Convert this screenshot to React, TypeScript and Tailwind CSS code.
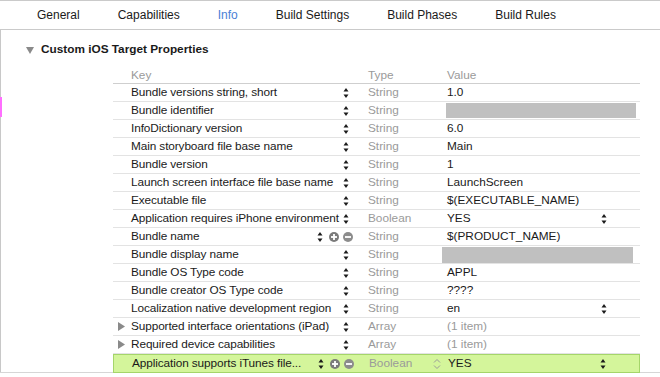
import React from "react";

type Row = {
  key: string;
  type: string;
  value?: string;
  redact?: "a" | "b";
  dropdown?: boolean;
  expand?: boolean;
  editing?: boolean;
  selected?: boolean;
  dimValue?: boolean;
};

const rows: Row[] = [
  { key: "Bundle versions string, short", type: "String", value: "1.0" },
  { key: "Bundle identifier", type: "String", redact: "a" },
  { key: "InfoDictionary version", type: "String", value: "6.0" },
  { key: "Main storyboard file base name", type: "String", value: "Main" },
  { key: "Bundle version", type: "String", value: "1" },
  { key: "Launch screen interface file base name", type: "String", value: "LaunchScreen" },
  { key: "Executable file", type: "String", value: "$(EXECUTABLE_NAME)" },
  { key: "Application requires iPhone environment", type: "Boolean", value: "YES", dropdown: true },
  { key: "Bundle name", type: "String", value: "$(PRODUCT_NAME)", editing: true },
  { key: "Bundle display name", type: "String", redact: "b" },
  { key: "Bundle OS Type code", type: "String", value: "APPL" },
  { key: "Bundle creator OS Type code", type: "String", value: "????" },
  { key: "Localization native development region", type: "String", value: "en", dropdown: true },
  { key: "Supported interface orientations (iPad)", type: "Array", value: "(1 item)", expand: true, dimValue: true },
  { key: "Required device capabilities", type: "Array", value: "(1 item)", expand: true, dimValue: true },
  {
    key: "Application supports iTunes file...",
    type: "Boolean",
    value: "YES",
    dropdown: true,
    editing: true,
    selected: true,
  },
];

const tabs = ["General", "Capabilities", "Info", "Build Settings", "Build Phases", "Build Rules"];

function Stepper() {
  return (
    <svg width="6" height="12" viewBox="0 0 6 12" className="shrink-0">
      <path d="M0.5 4.5 L3 1 L5.5 4.5 Z" fill="#1a1a1a" />
      <path d="M0.5 7.5 L5.5 7.5 L3 11 Z" fill="#1a1a1a" />
    </svg>
  );
}

function Chevrons() {
  return (
    <svg width="8" height="12" viewBox="0 0 8 12" className="shrink-0">
      <path d="M1 4.5 L4 1.5 L7 4.5" fill="none" stroke="#9a9a9a" strokeWidth="1" />
      <path d="M1 7.5 L4 10.5 L7 7.5" fill="none" stroke="#9a9a9a" strokeWidth="1" />
    </svg>
  );
}

function CircleButton({ minus }: { minus?: boolean }) {
  return (
    <svg width="10" height="10" viewBox="0 0 10 10" className="shrink-0">
      <circle cx="5" cy="5" r="5" fill={minus ? "#8c8c8c" : "#7a7a7a"} />
      <rect x="2" y="4.1" width="6" height="1.8" fill="#fff" />
      {!minus && <rect x="4.1" y="2" width="1.8" height="6" fill="#fff" />}
    </svg>
  );
}

function PropertyRow({ row }: { row: Row }) {
  return (
    <div
      className={
        row.selected
          ? "flex h-[19px] items-center border border-[#a5d56a] bg-[#d4f59b]"
          : "flex h-[18px] items-center border-b border-[#e3e3e3]"
      }
    >
      {/* key */}
      <div className="flex h-full w-[251px] shrink-0 items-center">
        <div className="flex w-[18px] shrink-0 items-center pl-[5px]">
          {row.expand && (
            <svg width="7" height="9" viewBox="0 0 7 9">
              <path d="M0 0 L7 4.5 L0 9 Z" fill="#8a8a8a" />
            </svg>
          )}
        </div>
        <span className="min-w-0 flex-1 whitespace-nowrap tracking-[-0.1px]">{row.key}</span>
        {row.editing ? (
          <div className="flex shrink-0 items-center pr-[11px]">
            <Stepper />
            <div className="ml-[6px]">
              <CircleButton />
            </div>
            <div className="ml-[4px]">
              <CircleButton minus />
            </div>
          </div>
        ) : (
          <div className="flex shrink-0 items-center pr-[15px]">
            <Stepper />
          </div>
        )}
      </div>
      {/* type */}
      <div className="flex h-full w-[79px] shrink-0 items-center justify-between pl-[4px] pr-[3px] text-[#9a9a9a]">
        <span>{row.type}</span>
        {row.selected && <Chevrons />}
      </div>
      {/* value */}
      <div className="flex h-full min-w-0 flex-1 items-center justify-between pl-[4px] pr-[33px]">
        {row.redact === "a" && <div className="ml-[-1px] h-[15px] w-[190px] shrink-0 bg-[#c0c0c0]" />}
        {row.redact === "b" && <div className="ml-[-5px] h-[16px] w-[191px] shrink-0 bg-[#c0c0c0]" />}
        {row.value && <span className={row.dimValue ? "text-[#9a9a9a]" : ""}>{row.value}</span>}
        {row.dropdown && <Stepper />}
      </div>
    </div>
  );
}

export default function App() {
  return (
    <div
      className="h-[377px] w-[660px] overflow-hidden bg-white text-[11.8px] leading-none text-[#1a1a1a]"
      style={{ fontFamily: '"Liberation Sans", Arial, sans-serif' }}
    >
      {/* Tab bar */}
      <div className="flex h-[30px] items-center gap-[38px] border-t border-b border-[#cacaca] pl-[37px] text-[12px]">
        {tabs.map((tab) => (
          <span key={tab} className={tab === "Info" ? "text-[#4a80d6]" : ""}>
            {tab}
          </span>
        ))}
      </div>

      <div className="relative h-[343px] border-b border-[#d6d6d6]">
        {/* left gutter */}
        <div className="absolute left-0 top-0 h-full w-px bg-[#c8c8c8]" />
        <div className="absolute left-0 top-[67px] h-[20px] w-[2px] bg-[#ff6fff]" />

        {/* Section title */}
        <div className="flex h-[39px] items-center pl-[26px] pt-[1px]">
          <svg width="8" height="7" viewBox="0 0 8 7" className="mr-[7px]">
            <path d="M0 0 L8 0 L4 7 Z" fill="#8a8a8a" />
          </svg>
          <span className="font-bold">Custom iOS Target Properties</span>
        </div>

        {/* Table */}
        <div className="ml-[113px] w-[527px]">
          <div className="flex h-[15px] items-center border-b border-[#cfcfcf] pb-[1px] text-[#9a9a9a]">
            <span className="w-[251px] pl-[18px]">Key</span>
            <span className="w-[79px] pl-[4px]">Type</span>
            <span className="pl-[4px]">Value</span>
          </div>
          {rows.map((row) => (
            <PropertyRow key={row.key} row={row} />
          ))}
        </div>
      </div>
    </div>
  );
}
